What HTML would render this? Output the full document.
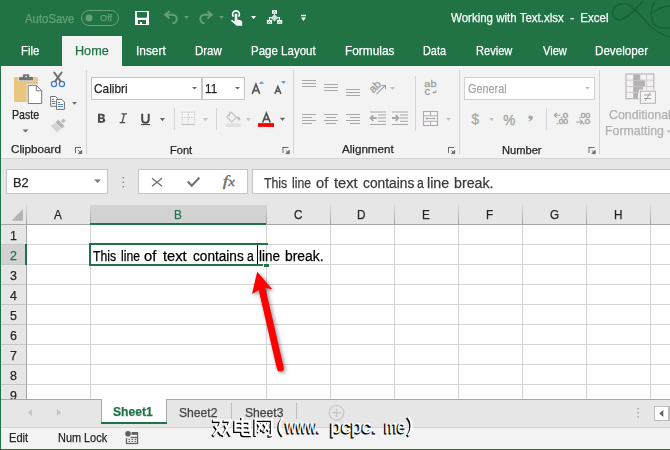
<!DOCTYPE html>
<html><head><meta charset="utf-8"><style>
*{margin:0;padding:0;box-sizing:border-box}
html,body{width:670px;height:450px;overflow:hidden}
body{position:relative;background:#217346;font-family:"Liberation Sans",sans-serif}
.a{position:absolute}
.t{position:absolute;white-space:pre;-webkit-text-stroke:0.25px currentColor;transform-origin:0 0;line-height:normal;font-family:"Liberation Sans",sans-serif}
svg{position:absolute;overflow:visible}
</style></head><body>
<!-- home tab -->
<div class="a" style="left:62px;top:36px;width:60px;height:30px;background:#f3f3f3"></div>
<!-- ribbon -->
<div class="a" style="left:1px;top:66px;width:669px;height:92px;background:#f3f3f3"></div>
<div class="a" style="left:1px;top:158px;width:669px;height:1px;background:#d5d5d5"></div>
<!-- formula area -->
<div class="a" style="left:1px;top:159px;width:669px;height:66px;background:#e6e6e6"></div>
<div class="a" style="left:6px;top:169px;width:102px;height:25px;background:#fff;border:1px solid #c6c6c6"></div>
<div class="a" style="left:138px;top:169px;width:110px;height:25px;background:#fff;border:1px solid #c6c6c6"></div>
<div class="a" style="left:252px;top:169px;width:420px;height:25px;background:#fff;border:1px solid #c6c6c6"></div>
<!-- grid -->
<div class="a" style="left:27px;top:225px;width:643px;height:174px;background:#fff"></div>
<div class="a" style="left:1px;top:225px;width:25px;height:174px;background:#e6e6e6"></div>
<svg width="670" height="450" style="left:0;top:0">
 <g stroke="#d4d4d4" stroke-width="1">
  <path d="M90.5 225V399M266.5 225V399M330.5 225V399M394.5 225V399M458.5 225V399M522.5 225V399M586.5 225V399M650.5 225V399"/>
  <path d="M27 244.5H670M27 264.5H670M27 284.5H670M27 304.5H670M27 324.5H670M27 344.5H670M27 364.5H670M27 384.5H670"/>
 </g>
 <g stroke="#c6c6c6"><path d="M1 244.5H26M1 264.5H26M1 284.5H26M1 304.5H26M1 324.5H26M1 344.5H26M1 364.5H26M1 384.5H26"/></g>
 <defs><linearGradient id="hg" x1="0" y1="0" x2="0" y2="1"><stop offset="0" stop-color="#dadada"/><stop offset="1" stop-color="#9e9e9e"/></linearGradient></defs>
 <!-- selected col B header -->
 <rect x="91" y="205" width="175" height="19" fill="#d2d2d2"/>
 <rect x="1" y="245" width="24" height="19" fill="#d2d2d2"/>
 <g fill="url(#hg)">
  <rect x="26" y="205" width="1" height="19"/><rect x="90" y="205" width="1" height="19"/><rect x="266" y="205" width="1" height="19"/>
  <rect x="330" y="205" width="1" height="19"/><rect x="394" y="205" width="1" height="19"/><rect x="458" y="205" width="1" height="19"/>
  <rect x="522" y="205" width="1" height="19"/><rect x="586" y="205" width="1" height="19"/><rect x="650" y="205" width="1" height="19"/>
 </g>
 <rect x="1" y="224" width="669" height="1" fill="#a6a6a6"/>
 <rect x="26" y="224" width="1" height="175" fill="#a6a6a6"/>
 <rect x="90" y="223" width="176" height="2" fill="#217346"/>
 <rect x="25" y="244" width="2" height="21" fill="#217346"/>
 <!-- select all triangle -->
 <path d="M11.5 220.7L23 220.7L23 209Z" fill="#b4b4b4"/>
 <!-- selection -->
 <rect x="89" y="243" width="179" height="2" fill="#217346"/>
 <rect x="89" y="243" width="2" height="23" fill="#217346"/>
 <rect x="89" y="264" width="174" height="2" fill="#217346"/>
 <rect x="264" y="264" width="5" height="3" fill="#217346"/>
 <rect x="257" y="245" width="1" height="19" fill="#000"/>
</svg>
<!-- tab bar -->
<div class="a" style="left:1px;top:399px;width:669px;height:1px;background:#a8a8a8"></div>
<div class="a" style="left:1px;top:400px;width:669px;height:27px;background:#e6e6e6"></div>
<div class="a" style="left:101px;top:399px;width:66px;height:23px;background:#fff;border-left:1px solid #a8a8a8;border-right:1px solid #a8a8a8"></div>
<div class="a" style="left:101px;top:422px;width:66px;height:2px;background:#217346"></div>
<div class="a" style="left:231px;top:403px;width:1px;height:16px;background:#bdbdbd"></div>
<div class="a" style="left:296px;top:403px;width:1px;height:16px;background:#bdbdbd"></div>
<div class="a" style="left:1px;top:427px;width:669px;height:1px;background:#d4d4d4"></div>
<div class="a" style="left:1px;top:428px;width:669px;height:21px;background:#f3f3f3"></div>
<div class="a" style="left:0;top:449px;width:670px;height:1px;background:#217346"></div>
<svg width="670" height="450" style="left:0;top:0">
 <!-- title swirl -->
 <g fill="none" stroke="#19613a" stroke-width="1.6">
  <path d="M643 1C637 7 630 17 621 19.5C614 21 611 14 613.5 9C616 4 623 2 629 5C636 9 642 18 650 26C657 32 664 36 670 37"/>
  <path d="M655 1C651 8 650 17 653 23C656 28 662 29 670 28"/>
  <path d="M653 13C658 8 664 6 670 6"/>
 </g>
 <!-- autosave toggle -->
 <rect x="81.5" y="10.5" width="37" height="15" rx="7.5" fill="none" stroke="#64a07c" stroke-width="1"/>
 <circle cx="89.1" cy="18" r="3.4" fill="#64a07c"/>
 <!-- save -->
 <rect x="135" y="11" width="14" height="14" fill="#fff"/>
 <path d="M137 12H147V17L146.2 17.8H137.8L137 17Z" fill="#217346"/>
 <rect x="138" y="20" width="8" height="4" fill="#217346"/>
 <rect x="140" y="22" width="2" height="2" fill="#fff"/>
 <!-- undo -->
 <g fill="none" stroke="#64a07c" stroke-width="2">
  <path d="M169.5 11.3L165.2 14.8L169.5 18.4"/>
  <path d="M165.2 14.8H172.5A4.2 4.2 0 0 1 172.5 23.2"/>
 </g>
 <g fill="none" stroke="#64a07c" stroke-width="2" transform="translate(377 0) scale(-1 1)">
  <path d="M169.5 11.3L165.2 14.8L169.5 18.4"/>
  <path d="M165.2 14.8H172.5A4.2 4.2 0 0 1 172.5 23.2"/>
 </g>
 <path d="M184 16H189L186.5 19Z" fill="#64a07c"/>
 <path d="M219 16H224L221.5 19Z" fill="#64a07c"/>
 <!-- touch -->
 <path d="M233.6 16.6A3.4 3.4 0 1 1 238.4 16.6" fill="none" stroke="#f2f2f2" stroke-width="1.7"/>
 <path d="M234.7 14.3Q236 12.6 237.3 14.3V19.4L240.8 20.2Q242.2 20.7 242.2 22.2V25.7H236.6L230.8 20.8Q231.4 19.6 232.8 20.2L234.7 21.4Z" fill="#f2f2f2"/>
 <path d="M251 16.1H256.1L253.55 19.1Z" fill="#fff"/>
 <!-- network -->
 <g fill="#fff">
  <rect x="272" y="10.2" width="5" height="3.6"/>
  <rect x="266.9" y="19.9" width="5.2" height="3.9"/>
  <rect x="277" y="19.9" width="5.2" height="3.9"/>
  <path d="M274.5 14.2L278.2 17.8L274.5 21.4L270.8 17.8Z" fill="#cfe1d5"/>
  <rect x="269" y="17.2" width="2.8" height="1"/><rect x="269" y="17.2" width="1" height="2.8"/>
  <rect x="277" y="17.2" width="2.8" height="1"/><rect x="279" y="17.2" width="1" height="2.8"/>
  <rect x="274" y="13.8" width="1" height="1.4"/>
 </g>
 <g fill="#217346" opacity="0.8"><circle cx="274.5" cy="11.6" r="0.5"/><circle cx="273.7" cy="12.8" r="0.5"/><circle cx="275.3" cy="12.8" r="0.5"/>
  <circle cx="269.5" cy="21.4" r="0.5"/><circle cx="268.7" cy="22.6" r="0.5"/><circle cx="270.3" cy="22.6" r="0.5"/>
  <circle cx="279.6" cy="21.4" r="0.5"/><circle cx="278.8" cy="22.6" r="0.5"/><circle cx="280.4" cy="22.6" r="0.5"/></g>
 <!-- customize qat -->
 <rect x="301" y="14.8" width="5" height="1.4" fill="#fff"/>
 <path d="M301 17.6H306L303.5 21Z" fill="#fff"/>

 <!-- ribbon separators -->
 <g fill="#d4d4d4">
  <rect x="86" y="70" width="1" height="84"/><rect x="293" y="70" width="1" height="84"/>
  <rect x="459" y="70" width="1" height="84"/><rect x="599" y="70" width="1" height="84"/>
  <rect x="174" y="108" width="1" height="22"/><rect x="216" y="108" width="1" height="22"/>
  <rect x="415" y="76" width="1" height="55"/><rect x="546" y="108" width="1" height="22"/>
 </g>
 <!-- paste -->
 <rect x="14" y="77" width="24" height="25" rx="1.2" fill="#eac57f"/>
 <rect x="18.5" y="76.5" width="15" height="4.6" fill="#f3f3f3"/>
 <rect x="19.1" y="77" width="14" height="3.4" fill="#737373"/>
 <rect x="22.9" y="74.2" width="6.3" height="3.5" rx="1" fill="#737373"/>
 <circle cx="26" cy="76.6" r="0.9" fill="#f3f3f3"/>
 <path d="M26.7 83.9H37L43.2 90.2V105H26.7Z" fill="#f3f3f3"/>
 <path d="M28.2 85.4H36.3L41.7 90.8V103.5H28.2Z" fill="#fff" stroke="#7a7a7a" stroke-width="1"/>
 <path d="M36.3 85.4V90.8H41.7" fill="none" stroke="#7a7a7a" stroke-width="1"/>
 <path d="M22.5 129.5H28.5L25.5 132.5Z" fill="#6d6d6d"/>
 <!-- scissors -->
 <path d="M54.2 72.5L60.6 81.3M61.6 72.5L55.2 81.3" stroke="#6f6f6f" stroke-width="2" fill="none" stroke-linecap="round"/>
 <circle cx="54" cy="84" r="2.6" fill="none" stroke="#3e7cc4" stroke-width="1.3"/>
 <circle cx="61.9" cy="84" r="2.6" fill="none" stroke="#3e7cc4" stroke-width="1.3"/>
 <!-- copy -->
 <path d="M50.7 96.5H55.5L57.5 98.5V106.2H50.7Z" fill="#fff" stroke="#6d6d6d" stroke-width="1"/>
 <path d="M56.6 99.4H61.8L64.4 102V109.4H56.6Z" fill="#fff" stroke="#6d6d6d" stroke-width="1"/>
 <g fill="#3f74b5"><rect x="52" y="98.8" width="2" height="0.9"/><rect x="52" y="101" width="3.5" height="0.9"/><rect x="52" y="103" width="3.5" height="0.9"/>
 <rect x="58" y="102" width="2" height="0.9"/><rect x="58" y="104.1" width="5" height="0.9"/><rect x="58" y="106" width="5" height="0.9"/></g>
 <path d="M72 102.1H77L74.5 104.8Z" fill="#6d6d6d"/>
 <!-- format painter -->
 <g transform="rotate(-45 60 124.2)">
  <rect x="62.8" y="122.6" width="3.7" height="3.2" fill="#bdbdbd"/>
  <rect x="58.25" y="119.8" width="3.5" height="8.8" fill="#b3b3b3"/>
  <path d="M57.9 120.2V128L52 127.8L52.6 118.2L56 119.75Z" fill="#d6d3d6"/>
 </g>
 <!-- dialog launchers -->
 <g id="dl" fill="#6a6a6a">
  <rect x="75" y="147" width="6" height="1"/><rect x="75" y="147" width="1" height="6"/>
  <path d="M78.2 150.2L81.7 153.6M81.7 150.3V153.6H78.4Z" stroke="#6a6a6a" stroke-width="0.9"/>
 </g>
 <use href="#dl" x="207.5" y="0"/>
 <use href="#dl" x="373" y="0"/>
 <use href="#dl" x="513.5" y="0"/>
 <!-- font boxes -->
 <rect x="91.5" y="77.5" width="110" height="22" fill="#fff" stroke="#c6c6c6"/>
 <rect x="202.5" y="77.5" width="42" height="22" fill="#fff" stroke="#c6c6c6"/>
 <path d="M192 87H197L194.5 89.6Z" fill="#6d6d6d"/>
 <path d="M235 87H240L237.5 89.6Z" fill="#6d6d6d"/>
 <!-- B I U -->
 <path d="M98 113.8H101.8Q104.8 113.8 104.8 116.1Q104.8 117.7 103.2 118.1Q105.3 118.5 105.3 120.3Q105.3 122.7 102 122.7H98ZM100.1 115.4V117.4H101.5Q102.6 117.4 102.6 116.4Q102.6 115.4 101.5 115.4ZM100.1 118.9V121.1H101.7Q103 121.1 103 120Q103 118.9 101.7 118.9Z" fill="#4a4a4a"/>
 <path d="M121.5 113.8H127M119.6 122.7H125.1M124.4 113.8L122.1 122.7" stroke="#4a4a4a" stroke-width="1.3" fill="none"/>
 <path d="M142.2 113.8V119.5Q142.2 122.7 145.45 122.7Q148.7 122.7 148.7 119.5V113.8" stroke="#4a4a4a" stroke-width="2" fill="none"/>
 <rect x="141" y="124" width="9" height="1.1" fill="#4a4a4a"/>
 <path d="M159.8 118H165.1L162.45 121.3Z" fill="#6d6d6d"/>
 <!-- borders -->
 <g fill="#cdbfcd">
  <path d="M181.7 111.7h13.4v1h-13.4zM181.7 117.5h13.4v1h-13.4z" fill="none"/>
 </g>
 <g stroke="#c9bcc9" stroke-width="1" stroke-dasharray="1 1.4" fill="none">
  <path d="M181.7 112.2H195.1M181.7 117.7H195.1M182.2 111.7V123.5M188.4 111.7V123.5M194.6 111.7V123.5"/>
 </g>
 <rect x="181.7" y="123.9" width="13.4" height="1.2" fill="#c4c4c4"/>
 <path d="M202.9 118H208L205.45 121.3Z" fill="#c8c8c8"/>
 <!-- fill -->
 <path d="M229.5 111.5V116M226.8 117L231.5 112.3L236.5 117.3L231.8 122L226.8 117Z" stroke="#c2c2c2" stroke-width="1.2" fill="none"/>
 <path d="M236.5 117.3Q240 115 240.5 119.5L238.5 121Z" fill="#c2c2c2"/>
 <rect x="226" y="123.3" width="14.5" height="3.6" fill="#e2dee2"/>
 <path d="M245.9 118H251L248.45 121.3Z" fill="#c8c8c8"/>
 <!-- font color -->
 <path d="M262.6 122.5L266.4 113.2L270.2 122.5M264.1 119.3H268.7" stroke="#505050" stroke-width="1.7" fill="none"/>
 <rect x="258" y="123.1" width="16" height="3.8" fill="#ff0000"/>
 <path d="M279.8 117.8H285.2L282.5 121Z" fill="#6d6d6d"/>
 <!-- grow shrink -->
 <path d="M252.2 93.9L255.95 84.2L259.7 93.9M253.6 90.6H258.3" stroke="#555" stroke-width="1.6" fill="none"/>
 <path d="M259 83.7H264L261.5 81.2Z" fill="#4a8fd2"/>
 <path d="M274.9 93.9L277.9 86.4L280.9 93.9M276 91.3H279.8" stroke="#555" stroke-width="1.5" fill="none"/>
 <path d="M281 81.2H286L283.5 83.7Z" fill="#4a8fd2"/>
 <!-- alignment -->
 <g fill="#a8a8a8">
  <rect x="302" y="80" width="14" height="1"/><rect x="302" y="83" width="14" height="1"/><rect x="302" y="86" width="14" height="1"/>
  <rect x="324" y="84" width="14" height="1"/><rect x="324" y="87" width="14" height="1"/><rect x="324" y="90" width="14" height="1"/>
  <rect x="346" y="89" width="14" height="1"/><rect x="346" y="92" width="14" height="1"/><rect x="346" y="95" width="14" height="1"/>
  <rect x="302" y="114" width="14" height="1"/><rect x="302" y="117" width="10" height="1"/><rect x="302" y="120" width="14" height="1"/><rect x="302" y="123" width="10" height="1"/>
  <rect x="324" y="114" width="14" height="1"/><rect x="326" y="117" width="10" height="1"/><rect x="324" y="120" width="14" height="1"/><rect x="326" y="123" width="10" height="1"/>
  <rect x="346" y="114" width="14" height="1"/><rect x="350" y="117" width="10" height="1"/><rect x="346" y="120" width="14" height="1"/><rect x="350" y="123" width="10" height="1"/>
  <rect x="370" y="111.5" width="16" height="1"/><rect x="378" y="114.5" width="8" height="1"/><rect x="378" y="117.5" width="8" height="1"/><rect x="378" y="120.8" width="8" height="1"/><rect x="370" y="124" width="16" height="1"/>
  <rect x="392" y="111.5" width="16" height="1"/><rect x="400" y="114.5" width="8" height="1"/><rect x="400" y="117.5" width="8" height="1"/><rect x="400" y="120.8" width="8" height="1"/><rect x="392" y="124" width="16" height="1"/>
 </g>
 <path d="M370.5 118H376.7M373.3 115L370.5 118L373.3 121" stroke="#a8a8a8" stroke-width="1.8" fill="none"/>
 <path d="M392 118H398.4M395.6 115L398.4 118L395.6 121" stroke="#a8a8a8" stroke-width="1.8" fill="none"/>
 <path d="M389.9 87.1H395L392.45 90.1Z" fill="#c0c0c0"/>
 <text x="0" y="0" font-family="Liberation Sans" font-size="11" fill="#a0a0a0" stroke="#a0a0a0" stroke-width="0.35" transform="translate(373.2 93.6) rotate(-45)" textLength="12.5" lengthAdjust="spacingAndGlyphs">ab</text>
 <path d="M376.5 94.2L385.2 85.5M381.6 85.5H385.5V89.3" stroke="#a0a0a0" stroke-width="1.1" fill="none"/>
 <text x="424.3" y="87.4" font-family="Liberation Sans" font-size="9.6" fill="#a0a0a0" stroke="#a0a0a0" stroke-width="0.3" textLength="12.2" lengthAdjust="spacingAndGlyphs">ab</text>
 <text x="424.6" y="94.9" font-family="Liberation Sans" font-size="11.2" fill="#a0a0a0" stroke="#a0a0a0" stroke-width="0.3">c</text>
 <path d="M436 90.3V92.4H433M434.3 91.1L433 92.4L434.3 93.7" stroke="#a0a0a0" stroke-width="1" fill="none"/>
 <!-- merge -->
 <rect x="423.5" y="111.5" width="14" height="14" fill="none" stroke="#b0a8b0" stroke-width="1"/>
 <rect x="424" y="112" width="13" height="13" fill="#f8f6f8"/>
 <rect x="423.5" y="111.5" width="14" height="14" fill="none" stroke="#b0a8b0" stroke-width="1.1"/>
 <path d="M423.5 115.8H437.5M423.5 121.3H437.5M430.5 111.5V115.8M430.5 121.3V125.5" stroke="#b0a8b0" stroke-width="1" fill="none"/>
 <path d="M426 118.5H435M427.3 117.2L426 118.5L427.3 119.8M433.7 117.2L435 118.5L433.7 119.8" stroke="#a8a0a8" stroke-width="0.9" fill="none"/>
 <path d="M446 118H451L448.5 120.8Z" fill="#c0c0c0"/>
 <!-- number -->
 <rect x="464.5" y="77.5" width="130" height="22" fill="#fff" stroke="#d0d0d0"/>
 <path d="M585 87H590L587.5 89.6Z" fill="#c0c0c0"/>
 <text x="471.5" y="124.2" font-family="Liberation Sans" font-size="15.5" fill="#a8a8a8" stroke="#a8a8a8" stroke-width="0.3" textLength="7.6" lengthAdjust="spacingAndGlyphs">$</text>
 <path d="M489.3 118H494L491.65 121Z" fill="#c0c0c0"/>
 <text x="503.3" y="125.1" font-family="Liberation Sans" font-size="14.5" fill="#a8a8a8" stroke="#a8a8a8" stroke-width="0.4" textLength="12" lengthAdjust="spacingAndGlyphs">%</text>
 <path d="M530 115.6Q532.9 115.6 532.9 117.6Q532.9 120.5 528.6 121.5L528.3 120.8Q530 120.3 530.5 119.3Q528.3 119.1 528.3 117.4Q528.3 115.6 530 115.6Z" fill="#a8a8a8"/>
 <g font-family="Liberation Sans" font-size="7.4" fill="#a0a0a0" stroke="#a0a0a0" stroke-width="0.35">
  <text x="560.2" y="117.6" textLength="8" lengthAdjust="spacingAndGlyphs">.0</text>
  <text x="556.3" y="124.4" textLength="11.8" lengthAdjust="spacingAndGlyphs">.00</text>
  <text x="578.4" y="117.6" textLength="11.8" lengthAdjust="spacingAndGlyphs">.00</text>
  <text x="582.2" y="124.4" textLength="8" lengthAdjust="spacingAndGlyphs">.0</text>
 </g>
 <path d="M554.3 115.3H560.5M556.8 113L554.3 115.3L556.8 117.6" stroke="#a0a0a0" stroke-width="1.1" fill="none"/>
 <path d="M576.3 122H582.6M580.1 119.7L582.6 122L580.1 124.3" stroke="#a0a0a0" stroke-width="1.1" fill="none"/>
 <!-- conditional formatting -->
 <rect x="626" y="74" width="27.8" height="24.7" fill="#f5f1f5" stroke="#b8b8b8" stroke-width="1.2"/>
 <path d="M633.5 74V98.7M640 74V98.7M646.6 74V98.7M626 80.1H653.8M626 86.5H653.8M626 92.4H653.8" stroke="#cccccc" stroke-width="1" fill="none"/>
 <rect x="633.6" y="74.5" width="6.3" height="5.8" fill="#b2b2b2"/>
 <rect x="633.6" y="80.6" width="11.4" height="5.6" fill="#b2b2b2"/>
 <rect x="633.6" y="87" width="9.4" height="5.2" fill="#b2b2b2"/>
 <rect x="633.6" y="92.8" width="4.4" height="5.6" fill="#b2b2b2"/>
 <rect x="638.8" y="89.6" width="18.2" height="15.3" fill="#f3f3f3"/>
 <rect x="640.4" y="91.2" width="15" height="12.1" fill="#f8f5f8" stroke="#b8b8b8" stroke-width="1.1"/>
 <path d="M644 95H651.3M644 98.5H651.3M650.2 92.8L645.2 100.9" stroke="#a0a0a0" stroke-width="1" fill="none"/>
 <path d="M666.5 130.5H670.5L668.5 133Z" fill="#c0c0c0"/>

 <!-- name box arrow & dots -->
 <path d="M94 179.4H101L97.5 183Z" fill="#7a7a7a"/>
 <g fill="#8a8a8a"><rect x="122.5" y="177" width="1.5" height="1.5"/><rect x="122.5" y="181.5" width="1.5" height="1.5"/><rect x="122.5" y="186" width="1.5" height="1.5"/></g>
 <path d="M152 178.3L162 186.3M162 178.3L152 186.3" stroke="#707070" stroke-width="1.35" fill="none"/>
 <path d="M187.8 181.5L191.8 185.8L199.4 177.6" stroke="#707070" stroke-width="2.1" fill="none"/>
 <text x="222.8" y="186.2" font-family="Liberation Serif" font-style="italic" font-size="15" fill="#707070" stroke="#707070" stroke-width="0.35" textLength="12" lengthAdjust="spacingAndGlyphs">f<tspan font-size="11.5">x</tspan></text>

 <!-- tab bar -->
 <path d="M31.9 408.8V416L27.8 412.4Z" fill="#c6c6c6"/>
 <path d="M56.9 408.8V416L61 412.4Z" fill="#c6c6c6"/>
 <circle cx="336.5" cy="412.8" r="7.3" fill="none" stroke="#c8c8c8" stroke-width="1.2"/>
 <path d="M332.3 412.8H340.7M336.5 408.6V417" stroke="#c8c8c8" stroke-width="1.4"/>
 <g fill="#a8a8a8"><rect x="637.3" y="408" width="1.6" height="1.6"/><rect x="637.3" y="412" width="1.6" height="1.6"/><rect x="637.3" y="416.1" width="1.6" height="1.6"/></g>
 <rect x="654.5" y="406.5" width="14" height="14" fill="#fff" stroke="#bcbcbc"/>
 <path d="M663.3 410.1V416.9L659.3 413.5Z" fill="#606060"/>
 <rect x="669" y="406" width="1" height="15" fill="#bcbcbc"/>
 <!-- status icon -->
 <rect x="126.5" y="437.5" width="11" height="6" fill="none" stroke="#606060" stroke-width="1.2"/>
 <rect x="131.5" y="432" width="6.5" height="2.8" fill="#606060"/>
 <rect x="137" y="432" width="1.1" height="11.5" fill="#606060"/>
 <rect x="125.6" y="436.4" width="5" height="1.6" fill="#f3f3f3"/>
 <circle cx="128" cy="433.8" r="2.8" fill="#606060"/>
 <g fill="#606060"><rect x="131.5" y="436.9" width="1.6" height="1"/><rect x="134.5" y="436.9" width="1.6" height="1"/>
 <rect x="128.5" y="438.9" width="1.6" height="1"/><rect x="131.5" y="438.9" width="1.6" height="1"/><rect x="134.5" y="438.9" width="1.6" height="1"/>
 <rect x="128.5" y="440.9" width="1.6" height="1"/><rect x="131.5" y="440.9" width="1.6" height="1"/><rect x="134.5" y="440.9" width="1.6" height="1"/></g>


 <!-- watermark -->
 <defs>
  <g id="wmg" fill="none" stroke-linecap="butt" stroke-linejoin="miter">
   <path d="M213 420.5H221.5L221 422Q218 431 213.3 435.5M215 425Q218.5 430 222 434.5"/>
   <path d="M223.5 420.5H230.5Q228 429 222.5 435.5M225.5 424.5Q228 431 231 435.5"/>
   <path d="M235.5 421.5H249.5V430.5H235.5ZM235.5 426H249.5M242.5 417V433.5Q242.5 434.8 244 434.8H250.5V432"/>
   <path d="M255.6 436V419.6H272V434Q272 435.3 270.5 435.3H268.5"/>
   <path d="M258 423L262.8 430.5M262.5 422.5L257.5 432M264 423L269.3 430.5M269 422.5L264 432"/>
   <path d="M283 418.5Q279.6 422 279.6 427Q279.6 432 283 435.5"/>
   <path d="M408 416.8Q411.6 420.5 411.6 426Q411.6 431.5 408 435.5"/>
  </g>
  <g id="wmt" font-family="Liberation Sans" font-size="17.5">
   <text x="285.8" y="432.6" textLength="34.4" lengthAdjust="spacingAndGlyphs">www.</text>
   <text x="330.3" y="432.6" textLength="46.8" lengthAdjust="spacingAndGlyphs">pcpc.</text>
   <text x="384.6" y="432.6" textLength="20.9" lengthAdjust="spacingAndGlyphs">me</text>
  </g>
 </defs>
 <use href="#wmg" stroke="#000" stroke-width="2.6" x="-1.1" y="1.1"/>
 <use href="#wmt" fill="#000" stroke="#000" stroke-width="1.2" x="-1" y="1"/>
 <use href="#wmg" stroke="#fff" stroke-width="2.3"/>
 <use href="#wmt" fill="#fff" stroke="#fff" stroke-width="0.3"/>
 <!-- red arrow -->
 <defs><filter id="sh" x="-50%" y="-50%" width="200%" height="200%"><feGaussianBlur stdDeviation="2"/></filter></defs>
 <g transform="translate(1.5 1.5)" opacity="0.45" filter="url(#sh)">
  <path d="M262 289L280.3 368" stroke="#000" stroke-width="7" stroke-linecap="round"/>
  <path d="M257.2 271.8L272.2 289.2L265.3 288L258.3 290.3L252 294Z" fill="#000"/>
 </g>
 <path d="M262 289L280.3 368" stroke="#ff0000" stroke-width="7" stroke-linecap="round"/>
 <path d="M257.2 271.8L272.2 289.2L265.3 288L258.3 290.3L252 294Z" fill="#ff0000"/>
</svg>

<div class="t" style="left:24.50px;top:11.82px;font-size:12.35px;color:#64a07c;font-weight:400;transform:scaleX(0.9224)">AutoSave</div>
<div class="t" style="left:100.40px;top:13.18px;font-size:9.3px;color:#64a07c;font-weight:400;transform:scaleX(0.9884)">Off</div>
<div class="t" style="left:451.20px;top:10.16px;font-size:13.08px;color:#ffffff;font-weight:400;transform:scaleX(0.8798)">Working with Text.xlsx  -  Excel</div>
<div class="t" style="left:20.60px;top:43.43px;font-size:12.79px;color:#ffffff;font-weight:400;transform:scaleX(0.8981)">File</div>
<div class="t" style="left:74.51px;top:43.33px;font-size:12.79px;color:#217346;font-weight:400;transform:scaleX(0.9883)">Home</div>
<div class="t" style="left:135.77px;top:43.43px;font-size:12.79px;color:#ffffff;font-weight:400;transform:scaleX(0.9295)">Insert</div>
<div class="t" style="left:194.50px;top:43.43px;font-size:12.79px;color:#ffffff;font-weight:400;transform:scaleX(0.8988)">Draw</div>
<div class="t" style="left:250.70px;top:43.43px;font-size:12.79px;color:#ffffff;font-weight:400;transform:scaleX(0.9014)">Page Layout</div>
<div class="t" style="left:344.77px;top:43.43px;font-size:12.79px;color:#ffffff;font-weight:400;transform:scaleX(0.9292)">Formulas</div>
<div class="t" style="left:422.95px;top:43.43px;font-size:12.79px;color:#ffffff;font-weight:400;transform:scaleX(0.8516)">Data</div>
<div class="t" style="left:475.73px;top:43.43px;font-size:12.79px;color:#ffffff;font-weight:400;transform:scaleX(0.8662)">Review</div>
<div class="t" style="left:542.50px;top:43.43px;font-size:12.79px;color:#ffffff;font-weight:400;transform:scaleX(0.8675)">View</div>
<div class="t" style="left:595.39px;top:43.43px;font-size:12.79px;color:#ffffff;font-weight:400;transform:scaleX(0.9103)">Developer</div>
<div class="t" style="left:12.40px;top:108.21px;font-size:11.92px;color:#262626;font-weight:400;transform:scaleX(0.8954)">Paste</div>
<div class="t" style="left:10.70px;top:143.34px;font-size:11.34px;color:#262626;font-weight:400;transform:scaleX(1.0293)">Clipboard</div>
<div class="t" style="left:94.40px;top:81.10px;font-size:13.37px;color:#262626;font-weight:400;transform:scaleX(0.8867)">Calibri</div>
<div class="t" style="left:204.52px;top:81.10px;font-size:13.37px;color:#262626;font-weight:400;transform:scaleX(0.8764)">11</div>
<div class="t" style="left:170.40px;top:143.54px;font-size:11.34px;color:#262626;font-weight:400;transform:scaleX(0.9779)">Font</div>
<div class="t" style="left:342.00px;top:143.34px;font-size:11.34px;color:#262626;font-weight:400;transform:scaleX(1.0268)">Alignment</div>
<div class="t" style="left:468.00px;top:81.10px;font-size:13.37px;color:#a6a6a6;font-weight:400;transform:scaleX(0.8116)">General</div>
<div class="t" style="left:502.00px;top:143.54px;font-size:11.34px;color:#262626;font-weight:400;transform:scaleX(0.9823)">Number</div>
<div class="t" style="left:609.40px;top:107.43px;font-size:12.79px;color:#b1b1b1;font-weight:400;transform:scaleX(0.9654)">Conditional</div>
<div class="t" style="left:605.33px;top:123.13px;font-size:12.79px;color:#b1b1b1;font-weight:400;transform:scaleX(0.9654)">Formatting</div>
<div class="t" style="left:12.62px;top:175.16px;font-size:13.08px;color:#262626;font-weight:400;transform:scaleX(0.9781)">B2</div>
<div class="t" style="left:263.90px;top:175.00px;font-size:13.81px;color:#3b3b3b;font-weight:400;transform:scaleX(0.8905)">This</div>
<div class="t" style="left:291.87px;top:175.00px;font-size:13.81px;color:#3b3b3b;font-weight:400;transform:scaleX(0.8835)">line</div>
<div class="t" style="left:315.89px;top:175.00px;font-size:13.81px;color:#3b3b3b;font-weight:400;transform:scaleX(1.0640)">of</div>
<div class="t" style="left:334.08px;top:175.00px;font-size:13.81px;color:#3b3b3b;font-weight:400;transform:scaleX(1.0640)">text</div>
<div class="t" style="left:362.50px;top:175.00px;font-size:13.81px;color:#3b3b3b;font-weight:400;transform:scaleX(0.9983)">contains</div>
<div class="t" style="left:416.87px;top:175.00px;font-size:13.81px;color:#3b3b3b;font-weight:400;transform:scaleX(0.8835)">a</div>
<div class="t" style="left:427.30px;top:175.00px;font-size:13.81px;color:#3b3b3b;font-weight:400;transform:scaleX(1.0319)">line</div>
<div class="t" style="left:454.00px;top:175.00px;font-size:13.81px;color:#3b3b3b;font-weight:400;transform:scaleX(1.0317)">break.</div>
<div class="t" style="left:93.39px;top:247.60px;font-size:13.81px;color:#000000;font-weight:400;transform:scaleX(0.8835)">This</div>
<div class="t" style="left:120.67px;top:247.60px;font-size:13.81px;color:#000000;font-weight:400;transform:scaleX(0.8835)">line</div>
<div class="t" style="left:144.24px;top:247.60px;font-size:13.81px;color:#000000;font-weight:400;transform:scaleX(1.0640)">of</div>
<div class="t" style="left:162.53px;top:247.60px;font-size:13.81px;color:#000000;font-weight:400;transform:scaleX(1.0640)">text</div>
<div class="t" style="left:192.50px;top:247.60px;font-size:13.81px;color:#000000;font-weight:400;transform:scaleX(0.9866)">contains</div>
<div class="t" style="left:246.77px;top:247.60px;font-size:13.81px;color:#000000;font-weight:400;transform:scaleX(0.8835)">a</div>
<div class="t" style="left:259.00px;top:247.60px;font-size:13.81px;color:#000000;font-weight:400;transform:scaleX(0.9769)">line</div>
<div class="t" style="left:285.00px;top:247.60px;font-size:13.81px;color:#000000;font-weight:400;transform:scaleX(1.0050)">break.</div>
<div class="t" style="left:113.10px;top:404.20px;font-size:13.37px;color:#217346;font-weight:700;transform:scaleX(0.9081)">Sheet1</div>
<div class="t" style="left:179.10px;top:404.50px;font-size:13.37px;color:#444444;font-weight:400;transform:scaleX(0.9091)">Sheet2</div>
<div class="t" style="left:245.30px;top:404.50px;font-size:13.37px;color:#444444;font-weight:400;transform:scaleX(0.9091)">Sheet3</div>
<div class="t" style="left:8.69px;top:430.65px;font-size:12.21px;color:#262626;font-weight:400;transform:scaleX(0.9110)">Edit</div>
<div class="t" style="left:58.01px;top:430.65px;font-size:12.21px;color:#262626;font-weight:400;transform:scaleX(0.8937)">Num Lock</div>
<div class="t" style="left:53.73px;top:208.22px;font-size:12.35px;color:#262626;font-weight:400;transform:scaleX(0.9500)">A</div>
<div class="t" style="left:173.73px;top:208.22px;font-size:12.35px;color:#217346;font-weight:400;transform:scaleX(0.9500)">B</div>
<div class="t" style="left:293.73px;top:208.22px;font-size:12.35px;color:#262626;font-weight:400;transform:scaleX(0.9500)">C</div>
<div class="t" style="left:357.25px;top:208.22px;font-size:12.35px;color:#262626;font-weight:400;transform:scaleX(0.9500)">D</div>
<div class="t" style="left:421.73px;top:208.22px;font-size:12.35px;color:#262626;font-weight:400;transform:scaleX(0.9500)">E</div>
<div class="t" style="left:485.73px;top:208.22px;font-size:12.35px;color:#262626;font-weight:400;transform:scaleX(0.9500)">F</div>
<div class="t" style="left:549.73px;top:208.22px;font-size:12.35px;color:#262626;font-weight:400;transform:scaleX(0.9500)">G</div>
<div class="t" style="left:613.72px;top:208.22px;font-size:12.35px;color:#262626;font-weight:400;transform:scaleX(0.9500)">H</div>
<div class="t" style="left:10.00px;top:228.16px;font-size:13.08px;color:#262626;font-weight:400;transform:scaleX(0.9500)">1</div>
<div class="t" style="left:10.48px;top:248.16px;font-size:13.08px;color:#217346;font-weight:400;transform:scaleX(0.9500)">2</div>
<div class="t" style="left:10.48px;top:268.16px;font-size:13.08px;color:#262626;font-weight:400;transform:scaleX(0.9500)">3</div>
<div class="t" style="left:10.48px;top:288.16px;font-size:13.08px;color:#262626;font-weight:400;transform:scaleX(0.9500)">4</div>
<div class="t" style="left:10.48px;top:308.16px;font-size:13.08px;color:#262626;font-weight:400;transform:scaleX(0.9500)">5</div>
<div class="t" style="left:10.48px;top:328.16px;font-size:13.08px;color:#262626;font-weight:400;transform:scaleX(0.9500)">6</div>
<div class="t" style="left:10.48px;top:348.16px;font-size:13.08px;color:#262626;font-weight:400;transform:scaleX(0.9500)">7</div>
<div class="t" style="left:10.48px;top:368.16px;font-size:13.08px;color:#262626;font-weight:400;transform:scaleX(0.9500)">8</div>
<div class="t" style="left:10.48px;top:388.16px;font-size:13.08px;color:#262626;font-weight:400;transform:scaleX(0.9500)">9</div>
<div class="a" style="left:1px;top:399px;width:100px;height:1px;background:#a8a8a8"></div>
<div class="a" style="left:1px;top:400px;width:100px;height:4px;background:#e6e6e6"></div>
</body></html>
